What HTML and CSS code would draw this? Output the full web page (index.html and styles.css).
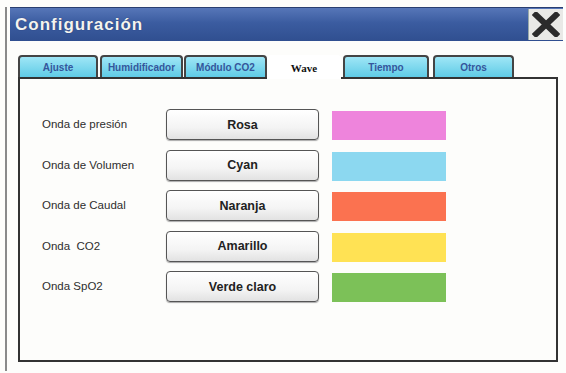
FILE: index.html
```html
<!DOCTYPE html>
<html>
	<head>
		<meta charset="utf-8">
		<title>Configuración</title>
		<link rel="stylesheet" href="styles.css">
	</head>
	<body>
		<!-- ventana de configuración -->
		<div class="window">
			<div class="titlebar">
				<span class="title">Configuración</span>
				<div class="close">
					<svg width="28" height="25" viewBox="0 0 28 25">
						<path d="M4 3 L24 22 M24 3 L4 22" stroke="#2b2b2b" stroke-width="6" stroke-linecap="square"/>
					</svg>
				</div>
			</div>
			<div class="content">
				<!-- pestañas -->
				<div class="tabs">
					<div class="tab t1">Ajuste</div>
					<div class="tab t2">Humidificador</div>
					<div class="tab t3">Módulo CO2</div>
					<div class="tab active t4">Wave</div>
					<div class="tab t5">Tiempo</div>
					<div class="tab t6">Otros</div>
				</div>
				<div class="panel">
					<div class="row">
						<span class="label">Onda de presión</span>
						<div class="btn">Rosa</div>
						<div class="swatch rosa"></div>
					</div>
					<div class="row">
						<span class="label">Onda de Volumen</span>
						<div class="btn">Cyan</div>
						<div class="swatch cyan"></div>
					</div>
					<div class="row">
						<span class="label">Onda de Caudal</span>
						<div class="btn">Naranja</div>
						<div class="swatch naranja"></div>
					</div>
					<div class="row">
						<span class="label">Onda&nbsp; CO2</span>
						<div class="btn">Amarillo</div>
						<div class="swatch amarillo"></div>
					</div>
					<div class="row">
						<span class="label">Onda SpO2</span>
						<div class="btn">Verde claro</div>
						<div class="swatch verde"></div>
					</div>
				</div>
			</div>
		</div>
	</body>
</html>
```
FILE: styles.css
```css
* {
	padding: 0;
	margin: 0;
	box-sizing: border-box;
}
body {
	background-color: #fdfdfb;
	font-family: "Liberation Sans", Arial, sans-serif;
}
.window {
	margin: 7px 3px 0 5px;
	height: 364px;
	border-left: 2px solid #8a8a8a;
}
.titlebar {
	height: 34px;
	margin-left: 3px;
	display: flex;
	align-items: center;
	justify-content: space-between;
	background: linear-gradient(#5676b8, #3b5ca0 45%, #304f90);
	border-top: 1px solid #2a3f70;
}
.title {
	padding-left: 5px;
	color: #f4f4f0;
	font-size: 17px;
	font-weight: bold;
	letter-spacing: 1px;
	text-shadow: 0 0 1px #203060;
}
.close {
	width: 35px;
	height: 31px;
	background-color: #e9e9e6;
	display: flex;
	align-items: center;
	justify-content: center;
	border-left: 1px solid #9aa;
}
.content {
	padding: 14px 0 0 11px;
}
.tabs {
	display: flex;
	height: 22px;
	width: 540px;
}
.tab {
	height: 22px;
	border: 2px solid #444;
	border-bottom: none;
	border-radius: 4px 4px 0 0;
	background: linear-gradient(#9fe6f6, #5fcbe6);
	color: #34569c;
	font-size: 10px;
	font-weight: bold;
	display: flex;
	align-items: center;
	justify-content: center;
}
.t1 { width: 80px; }
.t2 { width: 83px; margin-left: 2px; }
.t3 { width: 83px; margin-left: 1px; }
.t4 { width: 74px; }
.t5 { width: 86px; margin-left: 2px; }
.t6 { width: 81px; margin-left: 4px; }
.tab.active {
	background: #ffffff;
	color: #111111;
	border-color: #ffffff;
	font-family: "Liberation Serif", serif;
	font-size: 11px;
	position: relative;
	margin-bottom: -2px;
	height: 24px;
}
.panel {
	width: 540px;
	height: 285px;
	border: 2px solid #333;
	padding: 30px 0 0 22px;
	display: flex;
	flex-direction: column;
	gap: 9.5px;
}
.row {
	display: flex;
	align-items: flex-start;
	height: 31px;
}
.label {
	width: 124px;
	line-height: 31px;
	font-size: 11.5px;
	color: #2e2e2e;
}
.btn {
	width: 153px;
	height: 31px;
	border: 1px solid #555;
	border-radius: 4px;
	background: linear-gradient(#ffffff, #f4f4f4 60%, #e2e2e2);
	box-shadow: 0 1px 1px #aaa;
	font-size: 12.5px;
	font-weight: bold;
	color: #222;
	display: flex;
	align-items: center;
	justify-content: center;
}
.swatch {
	width: 114px;
	height: 29px;
	margin: 2px 0 0 13px;
}
.rosa { background-color: #ee84dc; }
.cyan { background-color: #8cd8f0; }
.naranja { background-color: #fb7250; }
.amarillo { background-color: #ffe254; }
.verde { background-color: #7cc158; }
```
